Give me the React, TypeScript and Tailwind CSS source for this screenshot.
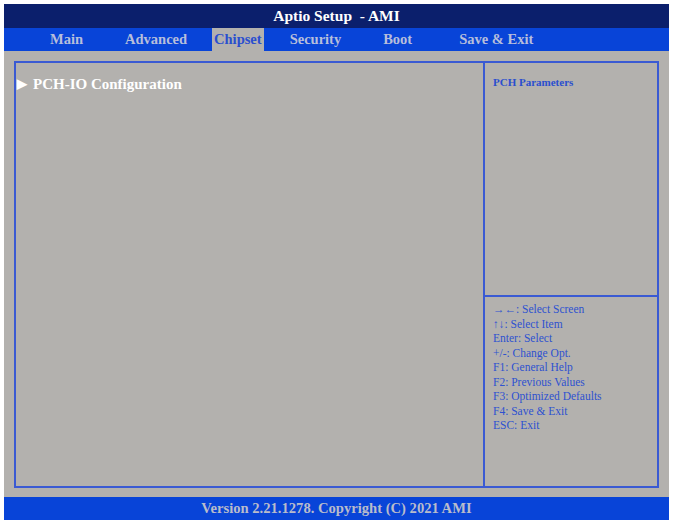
const tabs = [
  { label: "Main", ml: "ml-[46px]" },
  { label: "Advanced", ml: "ml-[42px]" },
  { label: "Chipset", ml: "ml-[25px]", active: true },
  { label: "Security", ml: "ml-[26px]" },
  { label: "Boot", ml: "ml-[42px]" },
  { label: "Save & Exit", ml: "ml-[47px]" },
];

const help = [
  "\u2192\u2190: Select Screen",
  "\u2191\u2193: Select Item",
  "Enter: Select",
  "+/-: Change Opt.",
  "F1: General Help",
  "F2: Previous Values",
  "F3: Optimized Defaults",
  "F4: Save & Exit",
  "ESC: Exit",
];

export default function App() {
  return (
    <div
      className="w-[674px] h-[524px] bg-white pt-[4px] pl-[4px] pr-[5px] pb-[4px]"
      style={{ fontFamily: '"Liberation Serif", "Times New Roman", serif' }}
    >
      <div className="flex flex-col h-full bg-[#b3b1ae]">
        {/* title */}
        <div className="h-[24px] bg-[#0b1f6c] flex items-center justify-center text-white font-bold text-[15.5px] whitespace-pre">
          Aptio Setup  - AMI
        </div>

        {/* tabs */}
        <div className="h-[23px] bg-[#0844d8] flex items-stretch text-[14.5px] font-bold">
          {tabs.map((t) =>
            t.active ? (
              <div
                key={t.label}
                className={`${t.ml} px-[2px] bg-[#b3b1ae] text-[#2a4fcf] flex items-center`}
              >
                {t.label}
              </div>
            ) : (
              <div key={t.label} className={`${t.ml} text-[#b7bedb] flex items-center`}>
                {t.label}
              </div>
            )
          )}
        </div>

        {/* body */}
        <div className="flex-1 px-[10px] pt-[10px] pb-[9px]">
          <div className="h-full flex border-2 border-[#3a5ad3]">
            <div className="flex-1 border-r-2 border-[#3a5ad3] pt-[12px] pl-[1px]">
              <div className="flex items-center text-white font-bold text-[15px] leading-[18px]">
                <span className="text-[13px] w-[16px] leading-[18px]">{"\u25B6"}</span>
                <span>PCH-IO Configuration</span>
              </div>
            </div>
            <div className="w-[172px] flex flex-col">
              <div className="h-[234px] border-b-2 border-[#3a5ad3] pt-[12px] pl-[8px]">
                <div className="text-[#2a4fcf] font-bold text-[11px] leading-[14px]">
                  PCH Parameters
                </div>
              </div>
              <div className="flex-1 pt-[5px] pl-[8px] text-[#2e52d0] text-[11.5px] leading-[14.5px]">
                {help.map((h) => (
                  <div key={h}>{h}</div>
                ))}
              </div>
            </div>
          </div>
        </div>

        {/* footer */}
        <div className="h-[23px] bg-[#0844d8] flex items-center justify-center text-[#b9bccb] font-bold text-[14.6px]">
          Version 2.21.1278. Copyright (C) 2021 AMI
        </div>
      </div>
    </div>
  );
}
